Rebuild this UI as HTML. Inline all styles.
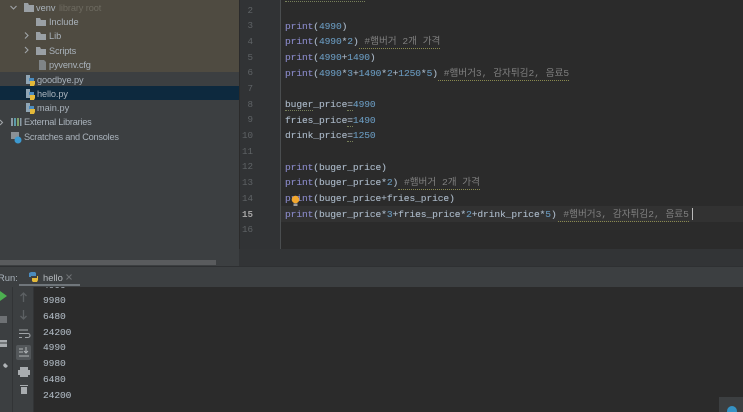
<!DOCTYPE html>
<html><head><meta charset="utf-8">
<style>
html,body{margin:0;padding:0;background:#2b2b2b}
#r{position:relative;width:743px;height:412px;overflow:hidden;background:#2b2b2b;font-family:"Liberation Sans","Noto Sans CJK KR",sans-serif;filter:blur(.3px)}
.a{position:absolute}
.t{position:absolute;font-size:9.2px;line-height:14px;color:#aab3bc;white-space:nowrap}
.c{position:absolute;left:285px;top:0;font-family:"Liberation Mono","Noto Sans CJK KR",monospace;font-size:9.6px;letter-spacing:-.1px;line-height:16px;color:#a9b7c6;white-space:pre;height:16px;-webkit-text-stroke:.12px currentColor}
.ln{position:absolute;left:240px;width:13px;text-align:right;font-family:"Liberation Mono",monospace;font-size:9.2px;line-height:16px;color:#5f6366;white-space:nowrap}
.p{color:#8888c6}.n{color:#6897bb}
.k{color:#808080;border-bottom:1px dotted #8a8a50;font-family:"Liberation Mono","Noto Sans CJK KR",monospace;font-size:9.6px;letter-spacing:0;line-height:14px;display:inline-block;height:13px;vertical-align:top;margin-top:1px;-webkit-text-stroke:0}
.u{border-bottom:1px dotted #77805a}
.o{position:absolute;left:43px;font-family:"Liberation Mono",monospace;font-size:9.6px;letter-spacing:-.1px;line-height:16px;color:#a9b2bb;-webkit-text-stroke:.12px currentColor}
svg{position:absolute;overflow:visible}
</style></head><body><div id="r">

<div class="a" style="left:0;top:0;width:239px;height:266px;background:#3c3f41"></div>
<div class="a" style="left:0;top:0;width:239px;height:72px;background:#4f4b41"></div>
<div class="a" style="left:0;top:86px;width:239px;height:14px;background:#0d293e"></div>
<div class="a" style="left:0;top:260px;width:216px;height:5px;background:#595b5d"></div>

<svg style="left:0;top:0" width="239" height="145" fill="none">
<path d="M10.500 6l3 3 3-3" stroke="#a0a4a8" stroke-width="1.100"/>
<path d="M25 32.500l3 3-3 3M25 47l3 3-3 3" stroke="#a0a4a8" stroke-width="1.100"/>
<path d="M0 120l2.500 2.500L0 125" stroke="#a0a4a8" stroke-width="1.100"/>
<g fill="#9aa0a5">
<path d="M24 3h4l1 2h5v7H24zM36 18h4l1 2h5v6H36zM36 32h4l1 2h5v6H36zM36 47h4l1 2h5v6H36z"/>
<path d="M39 60h5l2 2v8h-7z" fill="#7f8487"/>
</g>
<path d="M26 75h4v3h3v6h-7z" fill="#8fa5b5"/><path d="M29 78h5v3h-5z" fill="#4b8bbe"/><path d="M30 81h5v3l-1 2h-4z" fill="#e3b93a"/>
<path d="M26 89h4v3h3v6h-7z" fill="#8fa5b5"/><path d="M29 92h5v3h-5z" fill="#4b8bbe"/><path d="M30 95h5v3l-1 2h-4z" fill="#e3b93a"/>
<path d="M26 103h4v3h3v6h-7z" fill="#8fa5b5"/><path d="M29 106h5v3h-5z" fill="#4b8bbe"/><path d="M30 109h5v3l-1 2h-4z" fill="#e3b93a"/>
<path d="M11 118h2v8h-2z" fill="#8a9aa5"/><path d="M14 118h2v8h-2z" fill="#5c9aa8"/><path d="M17 118h2v8h-2z" fill="#7fa06a"/><path d="M20 118h1.500v8H20z" fill="#8a9aa5"/>
<path d="M11 132h8v7h-8z" fill="#8a9095"/>
<circle cx="18" cy="140" r="3.500" fill="#3d9ad1"/>
</svg>

<div class="t" style="left:36px;top:1px">venv <span style="color:#6d6a60;margin-left:1px;letter-spacing:-.1px">library root</span></div>
<div class="t" style="left:49px;top:15px">Include</div>
<div class="t" style="left:49px;top:29px">Lib</div>
<div class="t" style="left:49px;top:44px;letter-spacing:-.15px">Scripts</div>
<div class="t" style="left:49px;top:58px;letter-spacing:-.15px">pyvenv.cfg</div>
<div class="t" style="left:37px;top:73px;letter-spacing:-.1px">goodbye.py</div>
<div class="t" style="left:37px;top:87px;letter-spacing:-.1px">hello.py</div>
<div class="t" style="left:37px;top:101px">main.py</div>
<div class="t" style="left:24px;top:115px;letter-spacing:-.22px">External Libraries</div>
<div class="t" style="left:24px;top:130px;letter-spacing:-.22px">Scratches and Consoles</div>

<div class="a" style="left:239px;top:0;width:41px;height:249px;background:#313335"></div>
<div class="a" style="left:239px;top:0;width:1px;height:266px;background:#2b2b2b"></div>
<div class="a" style="left:280px;top:0;width:1px;height:249px;background:#4a4d4f"></div>
<div class="a" style="left:281px;top:206px;width:462px;height:16px;background:#323232"></div>
<div class="a" style="left:280px;top:206px;width:1px;height:16px;background:#4a4d4f"></div>
<div class="a" style="left:285px;top:0;width:80px;height:1px;border-bottom:1px dotted #77805a"></div>

<div class="ln" style="top:3px">2</div>
<div class="ln" style="top:18px">3</div>
<div class="ln" style="top:34px">4</div>
<div class="ln" style="top:50px">5</div>
<div class="ln" style="top:65px">6</div>
<div class="ln" style="top:81px">7</div>
<div class="ln" style="top:97px">8</div>
<div class="ln" style="top:112px">9</div>
<div class="ln" style="top:128px">10</div>
<div class="ln" style="top:144px">11</div>
<div class="ln" style="top:159px">12</div>
<div class="ln" style="top:175px">13</div>
<div class="ln" style="top:191px">14</div>
<div class="ln" style="top:207px;color:#a4a3a3;font-weight:bold">15</div>
<div class="ln" style="top:222px">16</div>

<div class="c" style="top:19px"><span class="p">print</span>(<span class="n">4990</span>)</div>
<div class="c" style="top:34px"><span class="p">print</span>(<span class="n">4990</span>*<span class="n">2</span>)<span class="k"> #햄버거 2개 가격</span></div>
<div class="c" style="top:50px"><span class="p">print</span>(<span class="n">4990</span>+<span class="n">1490</span>)</div>
<div class="c" style="top:66px"><span class="p">print</span>(<span class="n">4990</span>*<span class="n">3</span>+<span class="n">1490</span>*<span class="n">2</span>+<span class="n">1250</span>*<span class="n">5</span>)<span class="k"> #햄버거3, 감자튀김2, 음료5</span></div>
<div class="c" style="top:97px"><span class="u">buger</span>_price<span class="u">=</span><span class="n">4990</span></div>
<div class="c" style="top:113px">fries_price<span class="u">=</span><span class="n">1490</span></div>
<div class="c" style="top:128px">drink_price<span class="u">=</span><span class="n">1250</span></div>
<div class="c" style="top:160px"><span class="p">print</span>(buger_price)</div>
<div class="c" style="top:175px"><span class="p">print</span>(buger_price*<span class="n">2</span>)<span class="k"> #햄버거 2개 가격</span></div>
<div class="c" style="top:191px"><span class="p">print</span>(buger_price+fries_price)</div>
<div class="c" style="top:207px"><span class="p">print</span>(buger_price*<span class="n">3</span>+fries_price*<span class="n">2</span>+drink_price*<span class="n">5</span>)<span class="k" style="margin-left:1px"> #햄버거3, 감자튀김2, 음료5</span></div>
<div class="a" style="left:692px;top:208px;width:1px;height:12px;background:#bbb"></div>

<svg style="left:290px;top:195px" width="12" height="14"><circle cx="5.500" cy="4.500" r="3.800" fill="#f2a72e"/><rect x="3.500" y="8.500" width="4" height="2.500" fill="#9a9a9a"/></svg>

<div class="a" style="left:239px;top:249px;width:504px;height:17px;background:#323436"></div>
<div class="a" style="left:0;top:266px;width:743px;height:21px;background:#3c3f41"></div>
<div class="a" style="left:0;top:266px;width:743px;height:1px;background:#2e3032"></div>
<div class="a" style="left:-2px;top:272px;font-size:9.400px;line-height:12px;color:#a9b2bb">Run:</div>
<svg style="left:28px;top:271px" width="12" height="12"><path d="M1 5V2l2-1h4l1 1v3H3v1H1z" fill="#4b8bbe"/><path d="M10 5v4l-1 2H5l-1-1V7h5V5z" fill="#e3b93a"/></svg>
<div class="a" style="left:43px;top:272px;font-size:9.400px;line-height:12px;color:#b4b9bd">hello</div>
<svg style="left:66px;top:274px" width="7" height="7"><path d="M.5.5l5 5M5.500.5l-5 5" stroke="#6e7174"/></svg>
<div class="a" style="left:19px;top:284px;width:61px;height:2px;background:#70767b"></div>

<div class="a" style="left:0;top:287px;width:743px;height:125px;background:#2b2b2b"></div>
<div class="a" style="left:0;top:287px;width:34px;height:125px;background:#3c3f41"></div>
<div class="a" style="left:12px;top:287px;width:1px;height:125px;background:#323436"></div>
<div class="a" style="left:33px;top:287px;width:1px;height:125px;background:#323436"></div>
<div class="a" style="left:16px;top:345px;width:15px;height:15px;background:#53575a;border-radius:2px"></div>

<svg style="left:0;top:287px" width="34" height="125" fill="none">
<path d="M0 4l7 5-7 5z" fill="#4caf50"/>
<rect x="0" y="29" width="7" height="7" fill="#6e7174"/>
<path d="M0 53h7v7H0z" fill="#a8acaf"/><path d="M0 56h7" stroke="#3c3f41"/>
<path d="M1 84l3-4-1-2 2-2 3 3-2 2-2-1-3 4z" fill="#b0b4b7"/>
<path d="M23.500 6v9M20.500 9l3-3 3 3M23.500 23v9M20.500 29l3 3 3-3" stroke="#5c6063" stroke-width="1.300"/>
<path d="M19 43h9M19 46.500h9a2 2 0 010 4h-3M19 50.500h3" stroke="#a0a4a8" stroke-width="1.100"/>
<path d="M26 60v6M24 64l2 2 2-2M19 62h4M19 65h4M19 69h10" stroke="#b0b4b7" stroke-width="1"/>
<path d="M20 80h8v3h-8zM18 83h12v5H18zM20 87h8v3h-8z" fill="#a8acaf"/>
<path d="M21 100h6v7h-6zM20 98h8v1h-8z" fill="#a8acaf"/>
</svg>

<div class="a" style="left:43px;top:287px;width:30px;height:4px;overflow:hidden"><div style="margin-top:-9px;font-family:'Liberation Mono',monospace;font-size:9.600px;letter-spacing:-.1px;line-height:16px;color:#a9b2bb">4990</div></div>
<div class="o" style="top:293px">9980</div>
<div class="o" style="top:309px">6480</div>
<div class="o" style="top:325px">24200</div>
<div class="o" style="top:340px">4990</div>
<div class="o" style="top:356px">9980</div>
<div class="o" style="top:372px">6480</div>
<div class="o" style="top:388px">24200</div>

<div class="a" style="left:719px;top:397px;width:24px;height:15px;background:#3c3f41"></div>
<div class="a" style="left:727px;top:406px;width:10px;height:10px;border-radius:50%;background:#3592c4"></div>
</div></body></html>
